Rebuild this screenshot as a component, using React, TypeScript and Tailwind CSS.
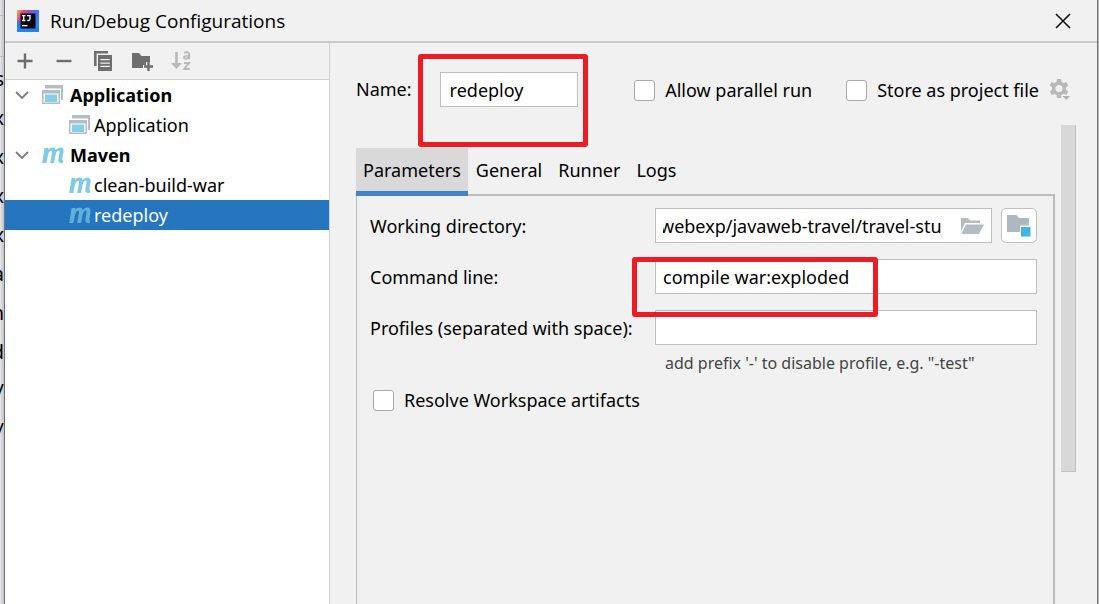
import React, { useState } from "react";

const fieldClass =
  "h-[35px] w-full min-w-0 border border-[#bfbfbf] bg-white px-[7px] text-lg leading-6 text-black outline-none";
const checkboxClass =
  "h-[21px] w-[21px] shrink-0 appearance-none rounded-[3px] border border-[#a9a9a9] bg-white checked:bg-[#4083c9]";

function IdeaLogo() {
  return (
    <svg width="22" height="22" viewBox="0 0 22 22" aria-hidden="true" className="shrink-0">
      <defs>
        <linearGradient id="idea" x1="0" y1="0.1" x2="1" y2="0.6">
          <stop offset="0" stopColor="#f7a05c" />
          <stop offset="0.2" stopColor="#ea4a6e" />
          <stop offset="0.45" stopColor="#8a4fc4" />
          <stop offset="0.7" stopColor="#3f74f0" />
          <stop offset="1" stopColor="#2b8cf7" />
        </linearGradient>
      </defs>
      <rect width="22" height="22" fill="url(#idea)" />
      <path d="M0 10 4 13v5.500h14.500L22 15v7H0z" fill="#1f86f0" />
      <rect x="3.5" y="3.5" width="15" height="15" fill="#0b0614" />
      <path
        d="M5 5.700h3.400M6.700 5.700v4.800M5 10.500h3.400M10 5.700h3v3.400q0 1.400-1.500 1.400h-1.300"
        fill="none"
        stroke="#fff"
        strokeWidth="1.3"
      />
      <rect x="5" y="15" width="5.500" height="1.300" fill="#fff" />
    </svg>
  );
}

function AppIcon() {
  return (
    <svg width="22" height="20" viewBox="0 0 22 20" aria-hidden="true" className="shrink-0">
      <path d="M3 0h18v15h-2V3.500H3z" fill="#b3bdc4" />
      <path d="M0 5h18v14H0z" fill="#b3bdc4" />
      <rect x="1.500" y="8.500" width="15" height="9" fill="#fff" />
      <rect x="3" y="9.500" width="12" height="7.500" fill="#85d0e8" />
    </svg>
  );
}

function MavenIcon({ selected = false }: { selected?: boolean }) {
  return (
    <svg width="22" height="17" viewBox="0 0 22 17" aria-hidden="true" className="shrink-0">
      <path
        d="M2.600 1h4l-.4 2C7.600 1.300 9.200.6 10.700.6c1.800 0 2.800.9 3 2.500C15 1.500 16.600.6 18.300.6c2.600 0 3.700 1.700 3.200 4.500L20.300 12c-.2 1 .2 1.500 1 1.400l-.4 2.400c-3.400.8-5-.6-4.500-3.600l1.100-6.600c.2-1.300-.1-2-.9-2-1.200 0-2.500 1.600-3 4.200L12.100 16H8.200L10 5.700c.2-1.300-.1-2-.9-2-1.300 0-2.600 1.700-3.100 4.300L4.300 16H.2z"
        fill={selected ? "#5fb0d8" : "#7fcbe6"}
      />
    </svg>
  );
}

function Chevron() {
  return (
    <svg width="14" height="9" viewBox="0 0 14 9" aria-hidden="true" className="shrink-0">
      <path d="M1 1 7 7 13 1" fill="none" stroke="#7d7d7d" strokeWidth="1.8" />
    </svg>
  );
}

function ToolButton({ label, children }: { label: string; children: React.ReactNode }) {
  return (
    <button type="button" aria-label={label} className="flex h-[22px] w-[22px] items-center justify-center">
      {children}
    </button>
  );
}

function Toolbar() {
  return (
    <div className="flex h-[37px] items-center gap-[17px] border-b border-[#d0d0d0] pl-[9px]">
      <ToolButton label="Add">
        <svg width="16" height="16" viewBox="0 0 16 16">
          <path d="M8 0.500v15M0.500 8h15" stroke="#6e6e6e" strokeWidth="2.4" />
        </svg>
      </ToolButton>
      <ToolButton label="Remove">
        <svg width="16" height="16" viewBox="0 0 16 16">
          <path d="M0.500 8h15" stroke="#6e6e6e" strokeWidth="2.4" />
        </svg>
      </ToolButton>
      <ToolButton label="Copy">
        <svg width="20" height="20" viewBox="0 0 20 20">
          <path d="M1 0h14v2.600H3.600V15H1z" fill="#6e6e6e" />
          <path
            d="M5 4h14v16H5zM7.400 8h9.400v1.300H7.400zM7.400 11.400h9.400v1.300H7.400zM7.400 14.800h9.400v1.300H7.400z"
            fill="#6e6e6e"
            fillRule="evenodd"
          />
        </svg>
      </ToolButton>
      <ToolButton label="New folder">
        <svg width="22" height="20" viewBox="0 0 22 20">
          <path d="M1 2h7l2.500 3H19v6h-4v3h-3v3H1z" fill="#6e6e6e" />
          <path d="M17.500 11v9M13 15.500h9" stroke="#6e6e6e" strokeWidth="2.4" />
        </svg>
      </ToolButton>
      <ToolButton label="Sort">
        <svg width="20" height="20" viewBox="0 0 20 20" fill="none" stroke="#b9b9b9">
          <path d="M5.500 1v14" strokeWidth="2.600" />
          <path d="M0 12h11l-5.500 6z" fill="#b9b9b9" stroke="none" />
          <path d="M13.200 1.800q5-1.500 5 1.500v5M18 4.600c-3.400 0-5 .3-5 1.800 0 2 4 1.700 5-.8" strokeWidth="1.900" />
          <path d="M13 12h5l-4.800 6h5.800" strokeWidth="1.900" />
        </svg>
      </ToolButton>
    </div>
  );
}

function Group({ label, icon, children }: { label: string; icon: React.ReactNode; children: React.ReactNode }) {
  return (
    <li>
      <button type="button" className="flex h-[30px] w-full items-center pl-[10px] text-left">
        <Chevron />
        <span className="ml-[13px] mr-[6px]">{icon}</span>
        <span className="font-bold">{label}</span>
      </button>
      <ul>{children}</ul>
    </li>
  );
}

function Entry({
  label,
  icon,
  selected = false,
}: {
  label: string;
  icon: React.ReactNode;
  selected?: boolean;
}) {
  return (
    <li>
      <button
        type="button"
        className={
          selected
            ? "flex h-[30px] w-full items-center gap-[3px] bg-[#2675bf] pl-[64px] text-left text-white"
            : "flex h-[30px] w-full items-center gap-[3px] pl-[64px] text-left"
        }
      >
        {icon}
        <span>{label}</span>
      </button>
    </li>
  );
}

function Sidebar() {
  return (
    <aside className="flex w-[325px] shrink-0 flex-col border-r border-[#d0d0d0]">
      <Toolbar />
      <ul className="grow bg-white text-lg leading-6">
        <Group label="Application" icon={<AppIcon />}>
          <Entry label="Application" icon={<AppIcon />} />
        </Group>
        <Group label="Maven" icon={<MavenIcon />}>
          <Entry label="clean-build-war" icon={<MavenIcon />} />
          <Entry label="redeploy" icon={<MavenIcon selected />} selected />
        </Group>
      </ul>
    </aside>
  );
}

function GearIcon() {
  return (
    <svg width="22" height="24" viewBox="0 0 22 24" aria-hidden="true">
      <path
        d="M8 1h4l.5 3 2 1.100 2.800-1.100 2 3.400-2.300 1.900v2.400l2.300 1.900-2 3.400-2.800-1.100-2 1.100-.5 3H8l-.5-3-2-1.100-2.800 1.100-2-3.400 2.300-1.900V9.300L.7 7.400l2-3.400 2.800 1.100 2-1.100zM10 7a3.500 3.500 0 1 0 0 7 3.500 3.500 0 0 0 0-7z"
        fill="#b9b9b9"
        fillRule="evenodd"
      />
      <path d="M12.500 17.500h9.500l-4.700 5z" fill="#b0b0b0" stroke="#f1f1f1" strokeWidth="1" />
    </svg>
  );
}

function Header() {
  return (
    <div className="flex h-[105px] items-start pr-[26px] text-lg leading-6">
      <label htmlFor="name" className="pt-[34px]">
        Name:
      </label>
      <div className="relative ml-[28px] mt-[29px] w-[138px] shrink-0">
        <input id="name" defaultValue="redeploy" className={fieldClass + " pl-[9px]"} />
        <div className="pointer-events-none absolute -left-[22px] -right-[10px] -top-[18px] h-[93px] rounded-[3px] border-[5px] border-[#ed1c24]" />
      </div>
      <div className="ml-auto flex items-center pt-[35px]">
        <input id="parallel" type="checkbox" className={checkboxClass} />
        <label htmlFor="parallel" className="ml-[10px] mr-[34px] whitespace-nowrap">
          Allow parallel run
        </label>
        <input id="store" type="checkbox" className={checkboxClass} />
        <label htmlFor="store" className="ml-[10px] mr-[10px] whitespace-nowrap">
          Store as project file
        </label>
        <button type="button" aria-label="Storage options">
          <GearIcon />
        </button>
      </div>
    </div>
  );
}

function Tabs() {
  const [active, setActive] = useState("Parameters");
  return (
    <div role="tablist" className="flex h-[48px] text-lg leading-6">
      {["Parameters", "General", "Runner", "Logs"].map((tab) => (
        <button
          key={tab}
          type="button"
          role="tab"
          aria-selected={tab === active}
          onClick={() => setActive(tab)}
          className={
            tab === active
              ? "relative border-b-[5px] border-[#4083c9] bg-[#d9d9d9] px-[7px]"
              : "border-b-[5px] border-transparent px-[8px]"
          }
        >
          {tab}
        </button>
      ))}
    </div>
  );
}

function Form() {
  return (
    <form className="grid grid-cols-[285px_minmax(0,1fr)] gap-y-[16px] pl-[13px] pr-[16px] pt-[12px] text-lg leading-6">
      <label htmlFor="dir" className="self-center">
        Working directory:
      </label>
      <div className="flex items-center gap-[9px]">
        <div className="flex h-[35px] min-w-0 grow items-center border border-[#bfbfbf] bg-white pl-[7px] pr-[7px]">
          <input
            id="dir"
            defaultValue="webexp/javaweb-travel/travel-stu"
            className="min-w-0 grow bg-transparent -indent-[3px] outline-none"
          />
          <button type="button" aria-label="Browse">
            <svg width="24" height="18" viewBox="0 0 24 18">
              <path d="M1 1h7l2 2.500h10V6H5L1 14z" fill="#b5bdc2" />
              <path d="M6 7.500h18l-5 9.500H1.300z" fill="#b5bdc2" />
            </svg>
          </button>
        </div>
        <button
          type="button"
          aria-label="Choose module directory"
          className="flex h-[35px] w-[36px] shrink-0 items-center justify-center rounded-[5px] border border-[#bfbfbf] bg-white"
        >
          <svg width="24" height="22" viewBox="0 0 24 22">
            <path d="M0 0h9.500l2.500 3h10v7.500h-9V17H0z" fill="#adb8bf" />
            <rect x="14" y="12" width="9.500" height="9.500" fill="#40b6e0" />
          </svg>
        </button>
      </div>

      <label htmlFor="cmd" className="self-center">
        Command line:
      </label>
      <div className="relative">
        <input id="cmd" defaultValue="compile war:exploded" className={fieldClass} />
        <div className="pointer-events-none absolute -left-[23px] -top-[2px] h-[60px] w-[246px] rounded-[3px] border-[5px] border-[#ed1c24]" />
      </div>

      <label htmlFor="profiles" className="self-center whitespace-nowrap">
        Profiles (separated with space):
      </label>
      <input id="profiles" className={fieldClass} />

      <p className="col-start-2 -mt-[10px] pl-[10px] text-base leading-6 text-[#444]">
        add prefix '-' to disable profile, e.g. "-test"
      </p>
      <div className="col-span-2 -mt-[3px] flex items-center pl-[3px]">
        <input id="resolve" type="checkbox" className={checkboxClass} />
        <label htmlFor="resolve" className="ml-[10px]">
          Resolve Workspace artifacts
        </label>
      </div>
    </form>
  );
}

function TitleBar() {
  return (
    <header className="flex h-[43px] shrink-0 items-center border-b-2 border-[#c9c9c9] pl-[12px] pr-[26px]">
      <IdeaLogo />
      <h1 className="ml-[11px] grow font-['Open_Sans'] text-[19px] leading-6">Run/Debug Configurations</h1>
      <button type="button" aria-label="Close">
        <svg width="16" height="16" viewBox="0 0 16 16">
          <path d="M1 1l14 14M15 1 1 15" stroke="#111" strokeWidth="1.600" />
        </svg>
      </button>
    </header>
  );
}

const editorLines = ["s", "x", "x", "x", "x", "a", "n", "d", "/", "/"];

export default function App() {
  return (
    <div className="flex h-screen overflow-hidden bg-[#dfe0e2] font-['Noto_Sans',sans-serif] text-black">
      <div
        aria-hidden="true"
        className="flex w-[4px] shrink-0 flex-col overflow-hidden bg-linear-to-r from-[#e6e7ea] to-[#bfc1c5]"
      >
        <div className="h-[16px] shrink-0 border-b border-[#b5b5b5]" />
        <div className="mb-[2px] h-[41px] shrink-0 border-b border-[#b5b5b5]" />
        {editorLines.map((c, i) => (
          <span key={i} className="flex h-[39px] shrink-0 items-center justify-end text-xl">
            {c}
          </span>
        ))}
      </div>
      <div className="flex min-w-0 grow flex-col border-x border-[#707070] bg-[#f1f1f1]">
        <TitleBar />
        <div className="flex min-h-0 grow">
          <Sidebar />
          <main className="flex min-w-0 grow flex-col pl-[26px]">
            <Header />
            <div className="flex min-h-0 grow">
              <div className="flex min-w-0 grow flex-col">
                <Tabs />
                <section className="-mt-[2px] grow border-l border-r-2 border-t-2 border-[#bdbdbd]">
                  <Form />
                </section>
              </div>
              <div className="-mt-[23px] ml-[6px] mr-[21px] h-[347px] w-[15px] shrink-0 border-b border-r border-[#c0c0c0] bg-[#d8d8d8]" />
            </div>
          </main>
        </div>
      </div>
      <div className="w-px shrink-0 bg-[#b8b8b8]" />
    </div>
  );
}
